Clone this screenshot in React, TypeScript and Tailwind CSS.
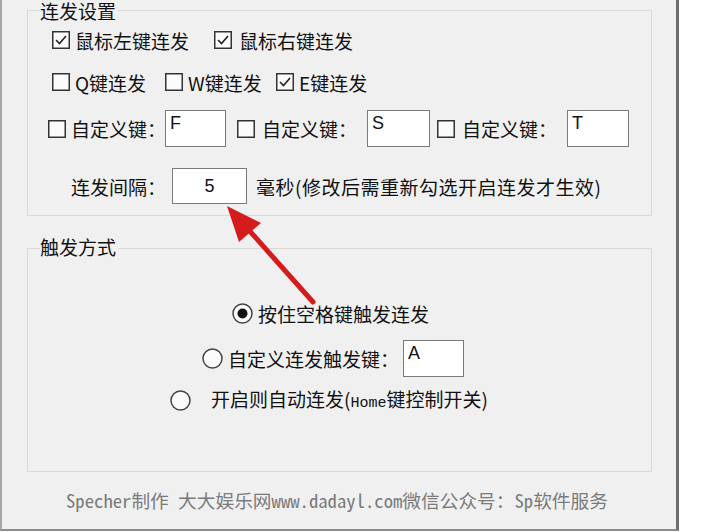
import React from 'react';

const ui = '[font-family:"Noto_Sans_CJK_SC","Noto_Sans",sans-serif]';

function Check({ on }: { on?: boolean }) {
  return (
    <svg width="18" height="18" viewBox="0 0 18 18" className="shrink-0">
      <rect x="0.75" y="0.75" width="16.5" height="16.5" fill="#fbfbfb" stroke="#333" strokeWidth="1.5" />
      {on && <polyline points="4,9 7.5,12.5 14,5" fill="none" stroke="#222" strokeWidth="1.6" />}
    </svg>
  );
}

function Radio({ on }: { on?: boolean }) {
  return (
    <svg width="21" height="21" viewBox="0 0 21 21" className="shrink-0">
      <circle cx="10.5" cy="10.5" r="9.5" fill="#fbfbfb" stroke="#444" strokeWidth="1.5" />
      {on && <circle cx="10.5" cy="10.5" r="5" fill="#111" />}
    </svg>
  );
}

function Box({ v, w, center }: { v: string; w: string; center?: boolean }) {
  return (
    <div
      className={`${w} h-full shrink-0 bg-white border border-[#7a7a7a] flex text-[18px] leading-none text-[#111] [font-family:"Liberation_Sans",sans-serif] ${
        center ? 'items-center justify-center' : 'items-start pl-[4px] pt-[3px]'
      }`}
    >
      {v}
    </div>
  );
}

export default function App() {
  return (
    <div className={`relative w-[708px] h-[532px] bg-white overflow-hidden whitespace-nowrap ${ui}`}>
      <div className="w-[679px] h-[531px] bg-[#f0f0f0] border-l-2 border-l-[#a6a6a6] border-r-[3px] border-r-[#6e6e6e] border-b-2 border-b-[#8c8c8c] flex flex-col pl-[25px] text-[19px] leading-none text-[#111]">
        {/* 连发设置 */}
        <div className="relative mt-[10px] w-[625px] h-[206px] border border-[#d9d9d9] flex flex-col">
          <span className="absolute -top-[10px] left-[12px] bg-[#f0f0f0] pr-[2px] leading-[20px]">连发设置</span>

          <div className="mt-[19px] h-[20px] flex items-center pl-[24px]">
            <div className="w-[162px] flex items-center gap-[5px]">
              <Check on />
              <span>鼠标左键连发</span>
            </div>
            <div className="flex items-center gap-[7px]">
              <Check on />
              <span>鼠标右键连发</span>
            </div>
          </div>

          <div className="mt-[22px] h-[20px] flex items-center pl-[24px]">
            <div className="w-[113px] flex items-center gap-[5px]">
              <Check />
              <span>Q键连发</span>
            </div>
            <div className="w-[111px] flex items-center gap-[5px]">
              <Check />
              <span>W键连发</span>
            </div>
            <div className="flex items-center gap-[5px]">
              <Check on />
              <span>E键连发</span>
            </div>
          </div>

          <div className="mt-[18px] h-[37px] flex items-center pl-[20px]">
            <div className="w-[117px] shrink-0 flex items-center gap-[5px]">
              <Check />
              <span>自定义键：</span>
            </div>
            <Box v="F" w="w-[61px]" />
            <div className="ml-[11px] w-[130px] shrink-0 flex items-center gap-[7px]">
              <Check />
              <span>自定义键：</span>
            </div>
            <Box v="S" w="w-[63px]" />
            <div className="ml-[7px] w-[130px] shrink-0 flex items-center gap-[7px]">
              <Check />
              <span>自定义键：</span>
            </div>
            <Box v="T" w="w-[62px]" />
          </div>

          <div className="mt-[21px] h-[36px] flex items-center pl-[43px]">
            <span className="w-[101px]">连发间隔：</span>
            <Box v="5" w="w-[75px]" center />
            <span className="ml-[9px] tracking-[0.5px]">毫秒(修改后需重新勾选开启连发才生效)</span>
          </div>
        </div>

        {/* 触发方式 */}
        <div className="relative mt-[32px] w-[625px] h-[224px] border border-[#d9d9d9] flex flex-col">
          <span className="absolute -top-[12px] left-[12px] bg-[#f0f0f0] pr-[2px] leading-[20px]">触发方式</span>

          <div className="mt-[52px] h-[24px] flex items-center ml-[204px] gap-[5px]">
            <Radio on />
            <span>按住空格键触发连发</span>
          </div>

          <div className="mt-[15px] h-[37px] flex items-center ml-[174px]">
            <Radio />
            <span className="ml-[5px] w-[175px]">自定义连发触发键：</span>
            <Box v="A" w="w-[61px]" />
          </div>

          <div className="mt-[11px] h-[24px] flex items-center ml-[142px]">
            <Radio />
            <span className="ml-[20px]">
              开启则自动连发(<span className="text-[15px] [font-family:'Liberation_Mono',monospace]">Home</span>键控制开关)
            </span>
          </div>
        </div>

        <div className="flex-1 flex items-center pl-[39px] text-[18.7px] text-[#7b7b7b] [font-family:'Noto_Sans_Mono_CJK_SC','Liberation_Mono','Noto_Sans_CJK_SC',monospace]">
          Specher制作 大大娱乐网www.dadayl.com微信公众号：Sp软件服务
        </div>
      </div>

      {/* red annotation arrow */}
      <svg className="absolute left-0 top-0 pointer-events-none" width="708" height="532">
        <line x1="313" y1="302" x2="247" y2="228" stroke="#d41c1c" strokeWidth="5" strokeLinecap="round" />
        <polygon points="227,206 239,242 261,223" fill="#d41c1c" />
      </svg>
    </div>
  );
}
